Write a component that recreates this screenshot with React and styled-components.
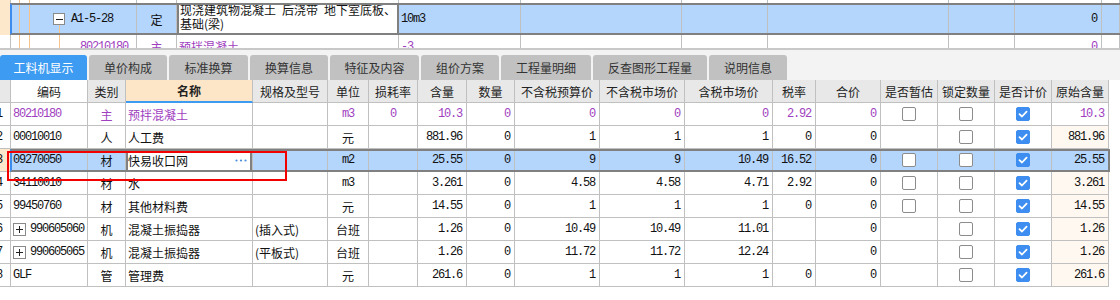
import React from "react";
import styled, { createGlobalStyle, css } from "styled-components";

const GlobalStyle = createGlobalStyle`
  html, body { margin: 0; padding: 0; background: #fff; }
  body {
    font-family: "Noto Sans CJK SC", "Liberation Sans", sans-serif;
    font-size: 12px;
    color: #111;
  }
`;

const GRID = "#c0c0c0";
const FRAME = "#808080";
const SEL = "#b4d5fc";
const PEACH = "#fde8cb";
const PURPLE = "#a040c0";
const TREE = "#f6c48a";
const BLUE = "#3d9bf2";
const MONO = `"Liberation Mono", "DejaVu Sans Mono", monospace`;

const justify = a => (a === "right" ? "flex-end" : a === "center" ? "center" : "flex-start");
const pad = a => (a === "right" ? "0 4px 0 0" : a === "center" ? "0" : "0 0 0 2px");
const isAscii = s => /^[\x00-\x7f]+$/.test(s);

const Page = styled.div`
  position: relative;
  width: 1120px;
  height: 300px;
  overflow: hidden;
  background: #fff;
`;

const Txt = styled.span`
  font-family: ${MONO};
  font-size: 12px;
  letter-spacing: -1.2px;
`;

const Val = ({ v }) => (v && isAscii(v) ? <Txt>{v}</Txt> : v || null);

/* ---------- upper pane ---------- */

const TopPane = styled.div`
  height: 48px;
  overflow: hidden;
`;

const frame = css`
  &::after {
    content: "";
    position: absolute;
    top: 0;
    bottom: 0;
    border: 2px solid ${FRAME};
    border-left: 2px solid #3c8cf0;
    pointer-events: none;
  }
`;

const TopRow = styled.div`
  position: relative;
  display: flex;
  flex: none;
  height: ${p => p.$h}px;
  ${p => p.$selected && frame}
  &::after { left: 10px; right: -4px; }
`;

const Strip = styled.div`
  flex: none;
  width: 11px;
  box-sizing: border-box;
  border-right: 1px solid ${GRID};
  background: ${p => (p.$active ? PEACH : "#fff")};
`;

const TopCells = styled.div`
  flex: 1;
  display: grid;
  grid-template-columns: 126px 40px 222px 122px 161px 86px 181px 66px 87px 1fr;
  background: ${p => (p.$selected ? SEL : "#fff")};
`;

const TopCell = styled.div`
  box-sizing: border-box;
  border-right: 1px solid ${GRID};
  display: flex;
  align-items: center;
  justify-content: ${p => justify(p.$align)};
  padding: ${p => pad(p.$align)};
  overflow: hidden;
  white-space: nowrap;
  color: ${p => (p.$tone === "purple" ? PURPLE : "#111")};
`;

const TopEdit = styled(TopCell)`
  display: block;
  background: #fff;
  border-right: none;
  box-shadow: inset 2px 0 ${FRAME}, inset -2px 0 ${FRAME};
  padding: 0 0 0 3px;
  white-space: pre;
  line-height: 14px;
`;

const treeBg = stem => {
  const g = `linear-gradient(${TREE}, ${TREE})`;
  const imgs = [g, g];
  const pos = ["8px 0", "18px 0"];
  if (stem !== undefined) {
    imgs.push(g);
    pos.push(`48px ${stem}px`);
  }
  return css`
    background-image: ${imgs.join(", ")};
    background-position: ${pos.join(", ")};
    background-size: 1px 100%;
    background-repeat: no-repeat;
  `;
};

const TreeCell = styled(TopCell)`
  padding-left: ${p => p.$indent || 0}px;
  ${p => treeBg(p.$stem)}
`;

const FoldBox = styled.span`
  flex: none;
  box-sizing: border-box;
  width: ${p => p.$size}px;
  height: ${p => p.$size}px;
  border: 1px solid #8a8a8a;
  background: #fff;
  display: inline-flex;
  align-items: center;
  justify-content: center;
  margin-right: ${p => p.$gap}px;
`;

const Fold = ({ open, size = 12, gap = 6 }) => (
  <FoldBox $size={size} $gap={gap}>
    <svg width="9" height="9" viewBox="0 0 9 9">
      <line x1="1" y1="4.5" x2="8" y2="4.5" stroke="#222" strokeWidth="1" />
      {!open && <line x1="4.5" y1="1" x2="4.5" y2="8" stroke="#222" strokeWidth="1" />}
    </svg>
  </FoldBox>
);

/* ---------- tabs ---------- */

const TabBar = styled.div`
  height: 30px;
  border-top: 2px solid #c8c8c8;
  background: #f3f3f3;
  display: flex;
  align-items: flex-end;
  gap: 2px;
`;

const Tab = styled.div`
  flex: none;
  width: ${p => p.$w}px;
  height: 25px;
  border-radius: 3px 3px 0 0;
  background: ${p => (p.$active ? BLUE : "#c1c1c1")};
  color: ${p => (p.$active ? "#fff" : "#333")};
  display: flex;
  align-items: center;
  justify-content: center;
  font-size: 12px;
`;

/* ---------- grid ---------- */

const COLS = "77px 38px 127px 75px 41px 49px 49px 48px 85px 85px 88px 43px 65px 57px 57px 57px 57px";

const GridRow = styled.div`
  position: relative;
  display: flex;
  height: 23px;
  ${p => p.$selected && frame}
  &::after { left: 10px; width: 1100px; box-sizing: border-box; }
`;

const RnCell = styled.div`
  flex: none;
  width: 11px;
  height: 23px;
  box-sizing: border-box;
  border-right: 1px solid ${GRID};
  border-bottom: 1px solid ${GRID};
  background: ${p => (p.$active ? PEACH : p.$head ? "#e8e8e8" : "#fff")};
  overflow: hidden;
  font-family: ${MONO};
  font-size: 12px;
  line-height: 22px;
  text-indent: -4px;
`;

const Cells = styled.div`
  display: grid;
  grid-template-columns: ${COLS};
  background: ${p => p.$bg || "#fff"};
`;

const HeadCell = styled.div`
  box-sizing: border-box;
  height: 23px;
  border-right: 1px solid ${GRID};
  border-bottom: ${p => (p.$accent ? `2px solid ${BLUE}` : `1px solid ${GRID}`)};
  background: ${p => p.$bg || "#e8e8e8"};
  display: flex;
  align-items: center;
  justify-content: center;
  font-size: 12px;
  font-weight: ${p => (p.$bold ? 700 : 400)};
  color: #222;
  white-space: nowrap;
  overflow: hidden;
`;

const Cell = styled.div`
  box-sizing: border-box;
  height: 23px;
  border-right: 1px solid ${GRID};
  border-bottom: 1px solid ${GRID};
  display: flex;
  align-items: center;
  justify-content: ${p => justify(p.$align)};
  padding: ${p => pad(p.$align)};
  overflow: hidden;
  white-space: nowrap;
  font-size: 12px;
  color: ${p => (p.$tone === "purple" ? PURPLE : "#111")};
  background: ${p => p.$bg || "transparent"};
  ${p =>
    p.$edit &&
    css`
      background: #fff;
      box-shadow: inset 2px 0 ${FRAME}, inset -2px 0 ${FRAME};
      padding: 0 5px 0 2px;
      justify-content: space-between;
    `}
`;

const Box = styled.span`
  box-sizing: border-box;
  width: 14px;
  height: 14px;
  border-radius: 2px;
  border: 1px solid ${p => (p.$on ? "#3d8ef0" : "#8c8c8c")};
  background: ${p => (p.$on ? "#3d8ef0" : "#fff")};
  display: inline-flex;
  align-items: center;
  justify-content: center;
`;

const Check = ({ on }) => (
  <Box $on={on}>
    {on && (
      <svg width="10" height="10" viewBox="0 0 10 10">
        <polyline points="1.5,5.2 4,7.5 8.6,2.6" fill="none" stroke="#fff" strokeWidth="1.8" strokeLinecap="round" strokeLinejoin="round" />
      </svg>
    )}
  </Box>
);

const Dots = () => (
  <svg width="12" height="3" viewBox="0 0 12 3">
    {[1.5, 6, 10.5].map(x => (
      <circle key={x} cx={x} cy="1.5" r="1.1" fill="#4a8fd8" />
    ))}
  </svg>
);

const Annotation = styled.div`
  position: absolute;
  left: 7px;
  top: 151px;
  width: 280px;
  height: 30px;
  box-sizing: border-box;
  border: 2px solid #f20000;
  pointer-events: none;
`;

const TABS = [
  ["工料机显示", 87],
  ["单价构成", 78],
  ["标准换算", 79],
  ["换算信息", 78],
  ["特征及内容", 89],
  ["组价方案", 78],
  ["工程量明细", 90],
  ["反查图形工程量", 114],
  ["说明信息", 78],
];

const HEAD = [
  "编码", "类别", "名称", "规格及型号", "单位", "损耗率", "含量", "数量",
  "不含税预算价", "不含税市场价", "含税市场价", "税率", "合价",
  "是否暂估", "锁定数量", "是否计价", "原始含量",
];

const ROWS = [
  { n: 1, purple: true, code: "80210180", type: "主", name: "预拌混凝土", unit: "m3", loss: "0", qty: "10.3", amount: "0", budget: "0", market: "0", taxed: "0", rate: "2.92", total: "0", est: true, orig: "10.3" },
  { n: 2, code: "00010010", type: "人", name: "人工费", unit: "元", qty: "881.96", amount: "0", budget: "1", market: "1", taxed: "1", rate: "0", total: "0", orig: "881.96" },
  { n: 3, selected: true, code: "09270050", type: "材", name: "快易收口网", unit: "m2", qty: "25.55", amount: "0", budget: "9", market: "9", taxed: "10.49", rate: "16.52", total: "0", est: true, orig: "25.55" },
  { n: 4, code: "34110010", type: "材", name: "水", unit: "m3", qty: "3.261", amount: "0", budget: "4.58", market: "4.58", taxed: "4.71", rate: "2.92", total: "0", est: true, orig: "3.261" },
  { n: 5, code: "99450760", type: "材", name: "其他材料费", unit: "元", qty: "14.55", amount: "0", budget: "1", market: "1", taxed: "1", rate: "0", total: "0", est: true, orig: "14.55" },
  { n: 6, expand: true, code: "990605060", type: "机", name: "混凝土振捣器", spec: "(插入式)", unit: "台班", qty: "1.26", amount: "0", budget: "10.49", market: "10.49", taxed: "11.01", rate: "", total: "0", orig: "1.26" },
  { n: 7, expand: true, code: "990605065", type: "机", name: "混凝土振捣器", spec: "(平板式)", unit: "台班", qty: "1.26", amount: "0", budget: "11.72", market: "11.72", taxed: "12.24", rate: "", total: "0", orig: "1.26" },
  { n: 8, code: "GLF", type: "管", name: "管理费", unit: "元", qty: "261.6", amount: "0", budget: "1", market: "1", taxed: "1", rate: "0", total: "0", orig: "261.6" },
];

const NUMS = ["qty", "amount", "budget", "market", "taxed", "rate", "total"];

const DataRow = ({ r }) => {
  const tone = r.purple ? "purple" : undefined;
  const origBg = r.purple || r.selected ? undefined : "#fef8f0";
  return (
    <GridRow $selected={r.selected}>
      <RnCell $active={r.selected}>{r.n}</RnCell>
      <Cells $bg={r.selected ? SEL : "#fff"}>
        <Cell $tone={tone}>
          {r.expand && <Fold size={13} gap={4} />}
          <Txt>{r.code}</Txt>
        </Cell>
        <Cell $align="center" $tone={tone}>{r.type}</Cell>
        {r.selected ? (
          <Cell $edit>
            <span>{r.name}</span>
            <Dots />
          </Cell>
        ) : (
          <Cell $tone={tone}>{r.name}</Cell>
        )}
        <Cell $tone={tone}>{r.spec}</Cell>
        <Cell $align="center" $tone={tone}><Val v={r.unit} /></Cell>
        <Cell $align="center" $tone={tone}><Val v={r.loss} /></Cell>
        {NUMS.map(k => (
          <Cell key={k} $align="right" $tone={tone}><Val v={r[k]} /></Cell>
        ))}
        <Cell $align="center">{r.est && <Check />}</Cell>
        <Cell $align="center"><Check /></Cell>
        <Cell $align="center"><Check on /></Cell>
        <Cell $align="right" $bg={origBg} $tone={tone}><Val v={r.orig} /></Cell>
      </Cells>
    </GridRow>
  );
};

const EmptyTop = ({ count }) =>
  Array.from({ length: count }, (_, i) => <TopCell key={i} />);

export default function App() {
  return (
    <Page>
      <GlobalStyle />
      <TopPane>
        <TopRow $h={3}>
          <Strip $active />
          <TopCells>
            <TreeCell />
            <EmptyTop count={9} />
          </TopCells>
        </TopRow>
        <TopRow $h={32} $selected>
          <Strip $active />
          <TopCells $selected>
            <TreeCell $indent={42} $stem={21}>
              <Fold open />
              <Txt>A1-5-28</Txt>
            </TreeCell>
            <TopCell $align="center">定</TopCell>
            <TopEdit>
              {"现浇建筑物混凝土\u2002后浇带\u2002地下室底板、\n基础(梁)"}
            </TopEdit>
            <TopCell><Txt>10m3</Txt></TopCell>
            <EmptyTop count={4} />
            <TopCell $align="right"><Txt>0</Txt></TopCell>
            <TopCell />
          </TopCells>
        </TopRow>
        <TopRow $h={23}>
          <Strip />
          <TopCells>
            <TreeCell $indent={69} $stem={0} $tone="purple"><Txt>80210180</Txt></TreeCell>
            <TopCell $align="center" $tone="purple">主</TopCell>
            <TopCell $tone="purple">预拌混凝土</TopCell>
            <TopCell $tone="purple"><Txt>-3</Txt></TopCell>
            <EmptyTop count={4} />
            <TopCell $align="right" $tone="purple"><Txt>0</Txt></TopCell>
            <TopCell />
          </TopCells>
        </TopRow>
      </TopPane>

      <TabBar>
        {TABS.map(([label, w], i) => (
          <Tab key={label} $w={w} $active={i === 0}>{label}</Tab>
        ))}
      </TabBar>

      <GridRow>
        <RnCell $head />
        <Cells>
          {HEAD.map((h, i) => (
            <HeadCell
              key={h}
              $bg={i === 0 ? "#fff" : i === 2 ? "#fde6c8" : undefined}
              $bold={i === 2}
              $accent={i === 2}
            >
              {h}
            </HeadCell>
          ))}
        </Cells>
      </GridRow>

      {ROWS.map(r => (
        <DataRow key={r.n} r={r} />
      ))}

      <Annotation />
    </Page>
  );
}
